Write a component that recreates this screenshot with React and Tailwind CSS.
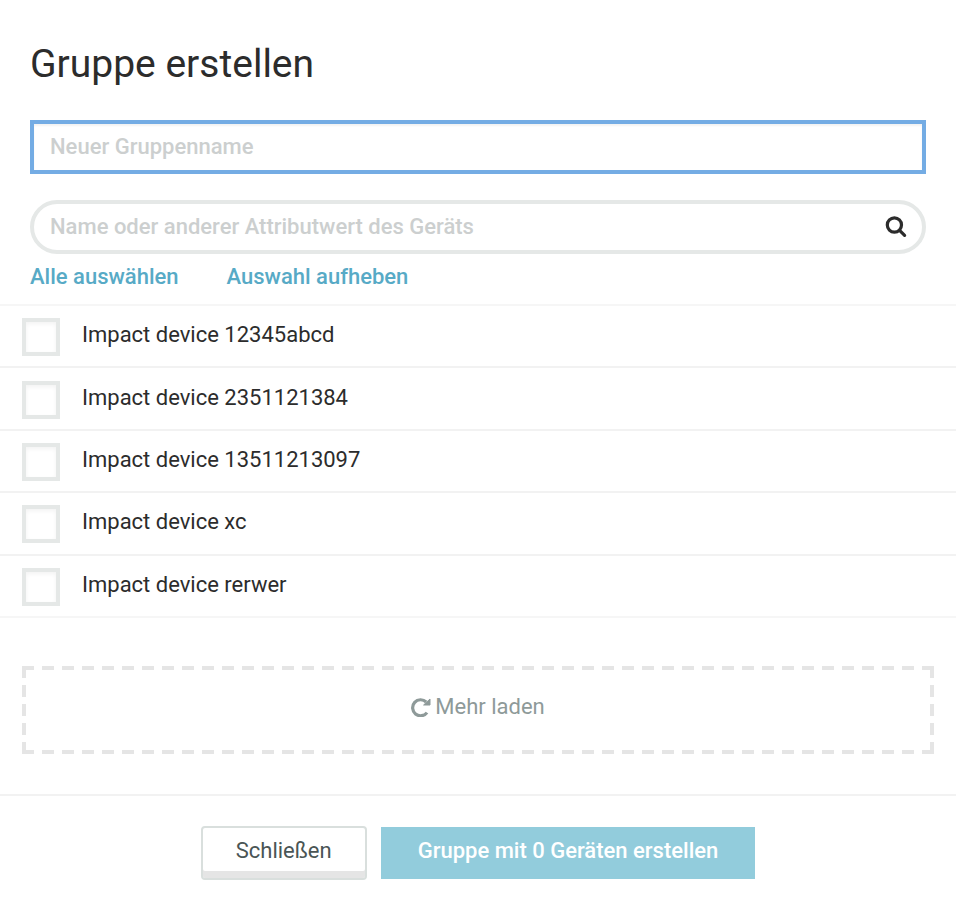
import React, { useState } from 'react';

const devices = [
  'Impact device 12345abcd',
  'Impact device 2351121384',
  'Impact device 13511213097',
  'Impact device xc',
  'Impact device rerwer',
];

function SearchIcon() {
  return (
    <svg viewBox="0 0 22 22" className="h-[22px] w-[22px]" fill="none" stroke="currentColor" aria-hidden="true">
      <circle cx="9.4" cy="9" r="7.1" strokeWidth="3.2" />
      <path d="M14.6 14.4 L19.6 19.4" strokeWidth="3.2" strokeLinecap="round" />
    </svg>
  );
}

function ReloadIcon() {
  return (
    <svg viewBox="0 0 20 20" className="h-5 w-5" aria-hidden="true">
      <path d="M16 15.6 A8 8 0 1 1 15.2 5" fill="none" stroke="currentColor" strokeWidth="3.2" />
      <path d="M19 2 V8 H12.6 Z" fill="currentColor" stroke="currentColor" strokeLinejoin="round" />
    </svg>
  );
}

export default function App() {
  const [name, setName] = useState('');
  const [query, setQuery] = useState('');
  const [selected, setSelected] = useState([]);

  const toggle = (device) =>
    setSelected((list) => (list.includes(device) ? list.filter((d) => d !== device) : [...list, device]));

  return (
    <main className="min-h-screen bg-white font-[Roboto,sans-serif] text-[22px] leading-8 text-[#2c2c2c]">
      <header className="px-[30px] pt-9">
        <h1 className="text-[39px] leading-[56px]">Gruppe erstellen</h1>
      </header>

      <div className="px-[30px] pt-7">
        <input
          type="text"
          aria-label="Neuer Gruppenname"
          placeholder="Neuer Gruppenname"
          value={name}
          onChange={(e) => setName(e.target.value)}
          className="block h-[54px] w-full border-4 border-[#74ace4] px-4 pb-0.5 font-medium shadow-[inset_0_2px_2px_rgba(0,0,0,0.05)] outline-none placeholder:text-[#cccfcf]"
        />
        <div className="mt-[26px] flex h-[54px] items-center rounded-full border-4 border-[#e5e8e7] pr-[15px]">
          <input
            type="search"
            aria-label="Name oder anderer Attributwert des Geräts"
            placeholder="Name oder anderer Attributwert des Geräts"
            value={query}
            onChange={(e) => setQuery(e.target.value)}
            className="min-w-0 flex-1 px-4 font-medium outline-none placeholder:text-[#cccfcf]"
          />
          <button type="button" aria-label="Suchen" className="text-[#2c2c2c]">
            <SearchIcon />
          </button>
        </div>
        <div className="flex gap-12 pt-[7px] pb-[11px] font-medium text-[#57aac6]">
          <button type="button" onClick={() => setSelected(devices)}>Alle auswählen</button>
          <button type="button" onClick={() => setSelected([])}>Auswahl aufheben</button>
        </div>
      </div>

      <ul className="grid min-h-[314px] auto-rows-fr border-t-2 border-[#f6f6f6]">
        {devices.map((device) => (
          <li key={device} className="border-b-2 border-[#f2f2f2] last:border-[#f6f6f6]">
            <label className="flex h-full items-center gap-[22px] px-[22px] pt-0.5">
              <input
                type="checkbox"
                checked={selected.includes(device)}
                onChange={() => toggle(device)}
                className="h-[38px] w-[38px] shrink-0 appearance-none border-4 border-[#e5e8e7] shadow-[inset_0_2px_4px_rgba(0,0,0,0.05)] checked:bg-[#92ccdc]"
              />
              <span className="pb-1">{device}</span>
            </label>
          </li>
        ))}
      </ul>

      <div className="px-[22px] pt-12 pb-10">
        <button
          type="button"
          className="flex h-[88px] w-full items-center justify-center gap-1 bg-[repeating-linear-gradient(90deg,#e5e5e5_0_12px,transparent_12px_20px),repeating-linear-gradient(90deg,#e5e5e5_0_12px,transparent_12px_20px),repeating-linear-gradient(180deg,#e5e5e5_0_12px,transparent_12px_19px),repeating-linear-gradient(180deg,#e5e5e5_0_12px,transparent_12px_19px)] bg-[length:100%_4px,100%_4px,4px_100%,4px_100%] bg-[position:left_top,left_bottom,left_top,right_top] bg-no-repeat pb-1.5 text-[#8e9a99]"
        >
          <ReloadIcon />
          Mehr laden
        </button>
      </div>

      <footer className="flex justify-center gap-3.5 border-t-2 border-[#f2f2f2] px-[22px] pt-[30px] pb-7">
        <button
          type="button"
          className="h-[54px] rounded-sm border-2 border-[#d9dfdd] bg-white px-[33px] pb-1 text-[#4a5555] shadow-[inset_0_-7px_0_#e5e5e5]"
        >
          Schließen
        </button>
        <button type="button" className="my-px h-[52px] bg-[#92ccdc] px-[37px] pb-1 font-medium text-white">
          Gruppe mit {selected.length} Geräten erstellen
        </button>
      </footer>
    </main>
  );
}
